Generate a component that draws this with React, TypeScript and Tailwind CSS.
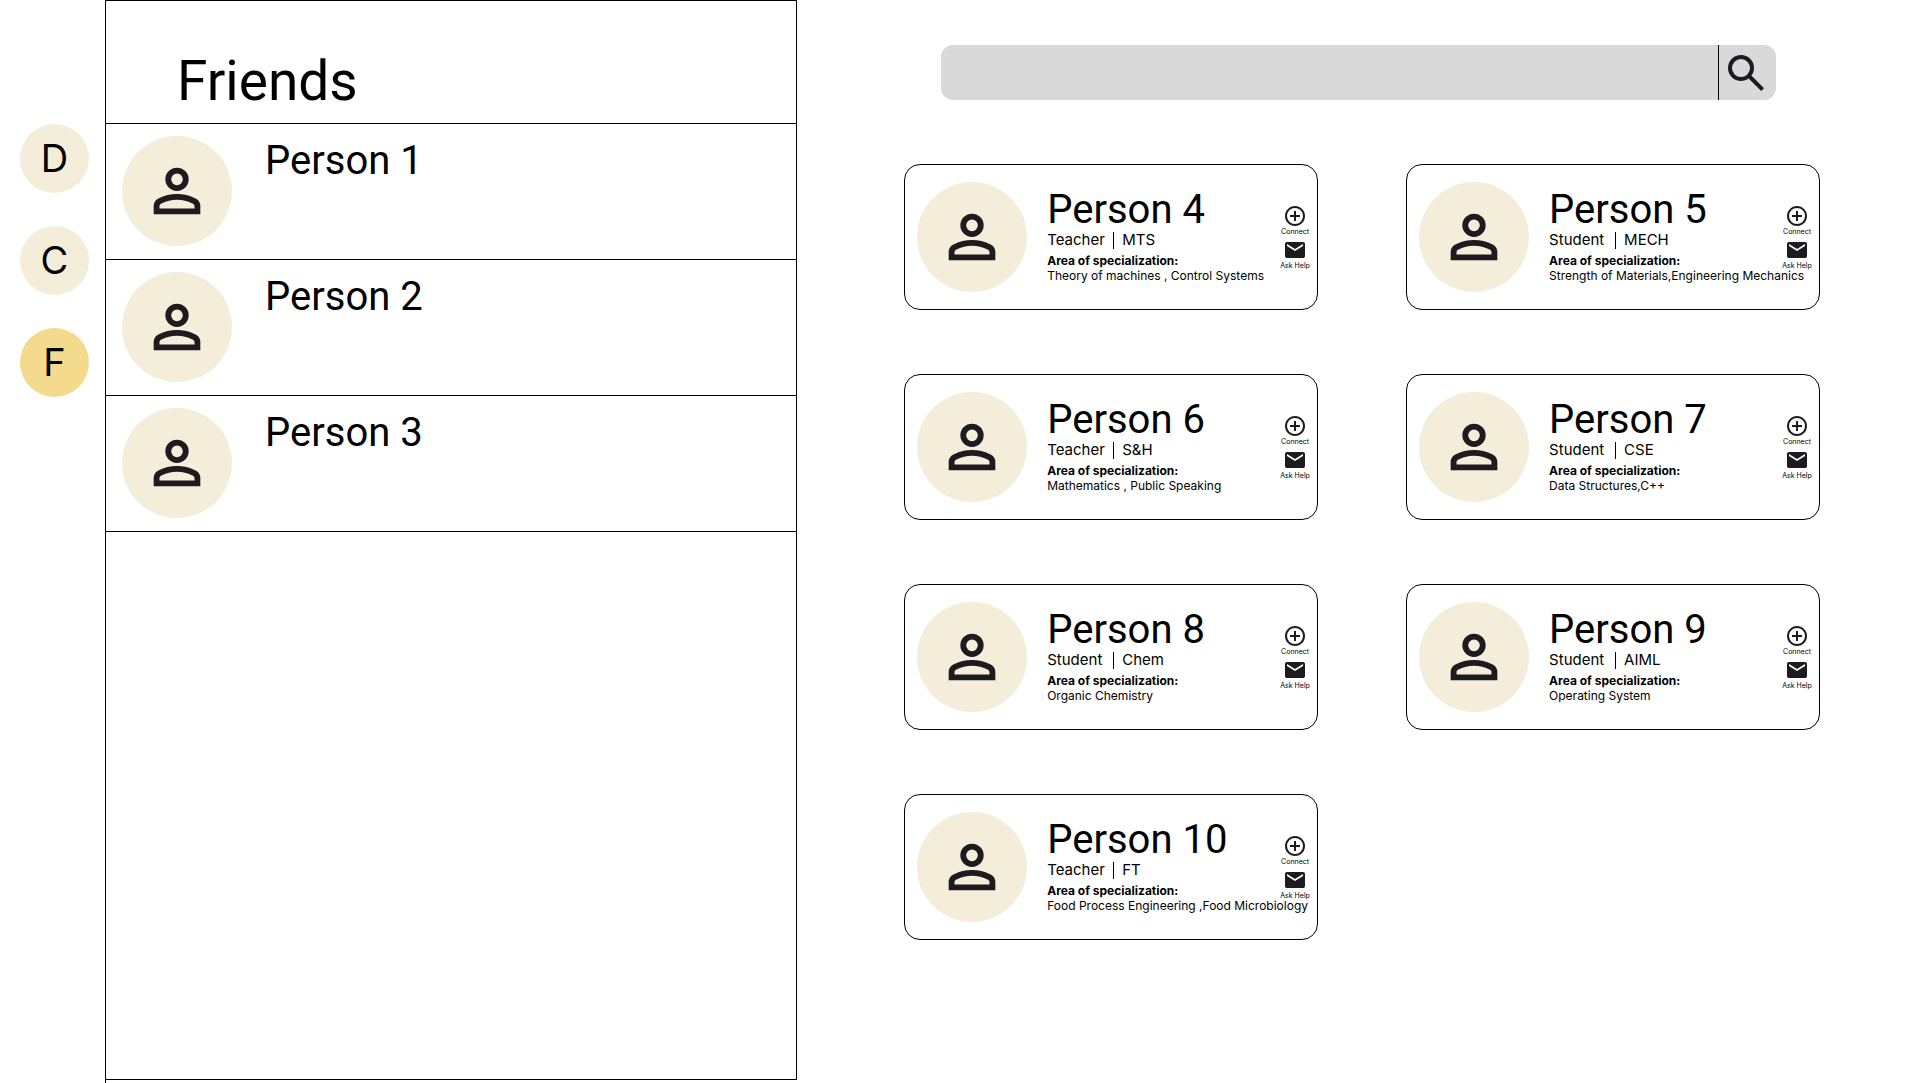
import type { ReactNode } from "react";

const PERSON =
  "M480-480q-66 0-113-47t-47-113q0-66 47-113t113-47q66 0 113 47t47 113q0 66-47 113t-113 47ZM160-160v-112q0-34 17.5-62.5T224-378q62-31 126-46.5T480-440q66 0 130 15.5T736-378q29 15 46.5 43.5T800-272v112H160Zm80-80h480v-32q0-11-5.5-20T700-306q-54-27-109-40.5T480-360q-56 0-111 13.5T260-306q-9 5-14.5 14t-5.5 20v32Zm240-320q33 0 56.5-23.5T560-640q0-33-23.5-56.5T480-720q-33 0-56.5 23.5T400-640q0 33 23.5 56.5T480-560Z";
const SEARCH =
  "M784-120 532-372q-30 24-69 38t-83 14q-109 0-184.5-75.5T120-580q0-109 75.5-184.5T380-840q109 0 184.5 75.5T640-580q0 44-14 83t-38 69l252 252-56 56ZM380-400q75 0 127.5-52.5T560-580q0-75-52.5-127.5T380-760q-75 0-127.5 52.5T200-580q0 75 52.5 127.5T380-400Z";
const ADD =
  "M440-280h80v-160h160v-80H520v-160h-80v160H280v80h160v160Zm40 200q-83 0-156-31.5T197-197q-54-54-85.5-127T80-480q0-83 31.5-156T197-763q54-54 127-85.5T480-880q83 0 156 31.5T763-763q54 54 85.5 127T880-480q0 83-31.5 156T763-197q-54 54-127 85.5T480-80Zm0-80q134 0 227-93t93-227q0-134-93-227t-227-93q-134 0-227 93t-93 227q0 134 93 227t227 93Z";
const MAIL =
  "M160-160q-33 0-56.5-23.5T80-240v-480q0-33 23.5-56.5T160-800h640q33 0 56.5 23.5T880-720v480q0 33-23.5 56.5T800-160H160Zm320-280 320-200v-80L480-520 160-720v80l320 200Z";

function Icon({ d, className }: { d: string; className: string }) {
  return (
    <svg viewBox="0 -960 960 960" fill="#1D1B20" className={className} aria-hidden="true">
      <path d={d} />
    </svg>
  );
}

function Avatar() {
  return (
    <div className="flex size-[110px] shrink-0 items-center justify-center rounded-full bg-[#F4EDDA]">
      <Icon d={PERSON} className="size-[70px]" />
    </div>
  );
}

function PersonName({ children }: { children: ReactNode }) {
  return <h2 className="font-['Roboto',sans-serif] text-[40px] leading-[42px] whitespace-nowrap">{children}</h2>;
}

const tabs = [
  { letter: "D", label: "Dashboard", active: false },
  { letter: "C", label: "Chats", active: false },
  { letter: "F", label: "Friends", active: true },
];

const friends = ["Person 1", "Person 2", "Person 3"];

const people = [
  { name: "Person 4", role: "Teacher", dept: "MTS", area: "Theory of machines , Control Systems" },
  { name: "Person 5", role: "Student", dept: "MECH", area: "Strength of Materials,Engineering Mechanics" },
  { name: "Person 6", role: "Teacher", dept: "S&H", area: "Mathematics , Public Speaking" },
  { name: "Person 7", role: "Student", dept: "CSE", area: "Data Structures,C++" },
  { name: "Person 8", role: "Student", dept: "Chem", area: "Organic Chemistry" },
  { name: "Person 9", role: "Student", dept: "AIML", area: "Operating System" },
  { name: "Person 10", role: "Teacher", dept: "FT", area: "Food Process Engineering ,Food Microbiology" },
];

function PersonCard({ name, role, dept, area }: (typeof people)[number]) {
  return (
    <article className="flex items-center rounded-2xl border border-black py-[17px] pr-[7px] pl-3">
      <Avatar />
      <div className="ml-5 min-w-0 flex-1 pb-[2px] whitespace-nowrap">
        <PersonName>{name}</PersonName>
        <div className="flex items-center text-[15px] leading-[18px]">
          <span className="w-[66px]">{role}</span>
          <span className="h-[17px] w-px bg-black" />
          <span className="ml-2">{dept}</span>
        </div>
        <p className="mt-1 text-xs leading-[15px] font-bold">Area of specialization:</p>
        <p className="text-xs leading-[15px]">{area}</p>
      </div>
      <div className="flex w-[30px] shrink-0 flex-col items-center gap-[2px] text-[7px] leading-2 whitespace-nowrap">
        <button type="button" className="flex flex-col items-center">
          <Icon d={ADD} className="size-6" />
          Connect
        </button>
        <button type="button" className="flex flex-col items-center">
          <Icon d={MAIL} className="size-6" />
          Ask Help
        </button>
      </div>
    </article>
  );
}

export default function App() {
  return (
    <div className="flex min-h-screen bg-white font-['Inter',sans-serif] text-black">
      <nav className="flex w-[105px] shrink-0 flex-col gap-[33px] pt-[124px] pl-5">
        {tabs.map((t) => (
          <button
            key={t.letter}
            type="button"
            aria-label={t.label}
            className={
              t.active
                ? "size-[69px] rounded-full bg-[#F4DA8C] pb-[2px] text-[38px] leading-none"
                : "size-[69px] rounded-full bg-[#F4EDDA] pb-[2px] text-[38px] leading-none"
            }
          >
            {t.letter}
          </button>
        ))}
      </nav>

      <aside className="flex w-[calc(36%+1px)] shrink-0 flex-col border-l border-black pb-[3px]">
        <div className="flex-1 border-t border-r border-b border-black">
          <h1 className="border-b border-black pt-[48px] pb-[10px] pl-[71px] font-['Roboto',sans-serif] text-[55px] leading-[64px]">
            Friends
          </h1>
          <ul>
            {friends.map((f) => (
              <li key={f} className="flex border-b border-black pt-[12px] pr-4 pb-[13px] pl-4">
                <Avatar />
                <div className="pt-1 pl-[33px]">
                  <PersonName>{f}</PersonName>
                </div>
              </li>
            ))}
          </ul>
        </div>
      </aside>

      <main className="min-w-0 flex-1 pt-[45px] pr-[100px] pl-[107px]">
        <form className="mr-[44px] ml-[37px] flex h-[55px] overflow-hidden rounded-xl bg-[#D9D9D9]">
          <input type="search" aria-label="Search people" className="min-w-0 flex-1 px-4 text-xl outline-none" />
          <button
            type="submit"
            aria-label="Search"
            className="flex w-[58px] items-center border-l border-black pl-[3px]"
          >
            <Icon d={SEARCH} className="size-12" />
          </button>
        </form>
        <div className="mt-16 grid grid-cols-2 gap-x-[88px] gap-y-16">
          {people.map((p) => (
            <PersonCard key={p.name} {...p} />
          ))}
        </div>
      </main>
    </div>
  );
}
